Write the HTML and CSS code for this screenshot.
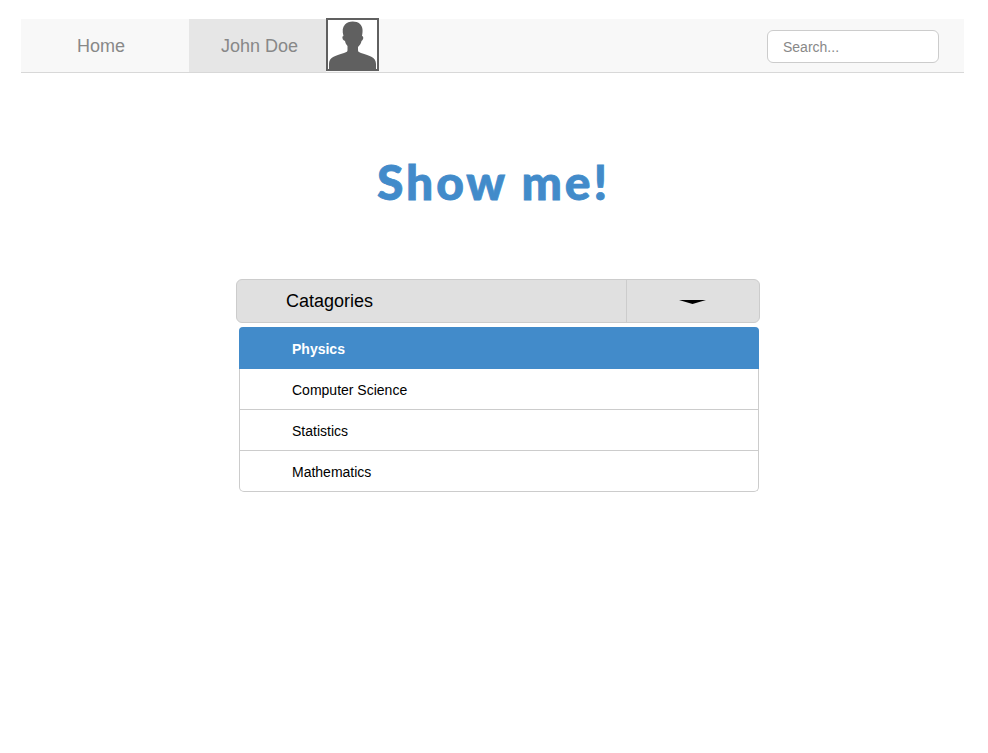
FILE: index.html
```html
<!DOCTYPE html>
<html lang="en">
<head>
<meta charset="utf-8">
<title>Show me!</title>
<link rel="stylesheet" href="styles.css">
</head>
<body>
<nav class="navbar">
  <a class="nav-link home">Home</a>
  <a class="nav-link user">John Doe</a>
  <svg class="avatar" viewBox="0 0 53 53">
    <rect x="1" y="1" width="51" height="51" fill="#fff" stroke="#606060" stroke-width="2"/>
    <path fill="#606060" d="M3 52V46C3 39 9 38 18 35C21 34 21.500 33.500 21.500 32V28C20 26.500 19.500 25 19 23C17 22.500 16 20 16.500 18.500L17.500 18C16 13 16.500 9 19 6.500C22 3 30 2.500 34 6C37 9 37 13 36 18C38 18.500 37.500 22 35.500 23C35 25.500 34 27 32 29V32C32 33.500 32.500 34 35 35C44 38 50 39 50 46V52Z"/>
  </svg>
  <input class="search" type="text" placeholder="Search...">
</nav>
<main>
  <h1 class="title">Show me!</h1>
  <div class="select">
    <span class="select-label">Catagories</span>
    <span class="select-toggle"><svg class="arrow" viewBox="0 0 27 4" preserveAspectRatio="none"><path d="M0 0H27L13.500 4Z"/></svg></span>
  </div>
  <ul class="menu">
    <li class="item active">Physics</li>
    <li class="item">Computer Science</li>
    <li class="item">Statistics</li>
    <li class="item">Mathematics</li>
  </ul>
</main>
</body>
</html>
```
FILE: styles.css
```css
* { box-sizing: border-box; }
body {
  margin: 0;
  padding: 18px 24px 0 21px;
  background: #fff;
  color: #000;
  font-family: "Liberation Sans", Arial, sans-serif;
}
.navbar {
  display: flex;
  height: 55px;
  padding-right: 25px;
  background: linear-gradient(#fff 1px, #f8f8f8 1px);
  border-bottom: 1px solid #d8d8d8;
}
.nav-link {
  height: 53px;
  margin-top: 1px;
  line-height: 54px;
  font-size: 18px;
  color: #888;
}
.home { width: 168px; padding-left: 56px; }
.user { width: 137px; padding-left: 32px; background: #e6e6e6; }
.avatar { width: 53px; height: 53px; }
.search {
  width: 172px;
  height: 33px;
  margin: 12px 0 0 auto;
  padding: 0 15px;
  border: 1px solid #ccc;
  border-radius: 6px;
  background: #fff;
  font: 14px "Liberation Sans", Arial, sans-serif;
}
.search::placeholder { color: #888; opacity: 1; }
.title {
  width: 240px;
  height: 60px;
  margin: 79px 0 0 356px;
  font: 900 48px/60px Lato, sans-serif;
  letter-spacing: 2.9px;
  -webkit-text-stroke: 0.8px #428bca;
  color: #428bca;
  white-space: nowrap;
}
.select {
  display: flex;
  width: 524px;
  height: 44px;
  margin: 67px 0 0 215px;
  border: 1px solid #ccc;
  border-radius: 6px;
  background: #e0e0e0;
}
.select-label {
  width: 390px;
  padding-left: 49px;
  border-right: 1px solid #ccc;
  font-size: 18px;
  line-height: 42px;
}
.select-toggle {
  flex: 1;
  display: flex;
  align-items: center;
  justify-content: center;
  padding-right: 2px;
}
.arrow { width: 27px; height: 4px; margin-top: 2px; }
.menu {
  width: 520px;
  height: 165px;
  margin: 4px 0 0 218px;
  padding: 0;
  border: 1px solid #ccc;
  border-top: 0;
  border-radius: 5px;
  list-style: none;
  font-size: 14px;
}
.item {
  height: 41px;
  padding-left: 52px;
  line-height: 43px;
  border-bottom: 1px solid #ccc;
}
.item:last-child { border-bottom: 0; }
.active {
  height: 42px;
  margin: 0 -1px;
  padding-left: 53px;
  line-height: 44px;
  border: 0;
  border-radius: 4px 4px 0 0;
  background: #428bca;
  color: #fff;
  font-weight: bold;
}
```
